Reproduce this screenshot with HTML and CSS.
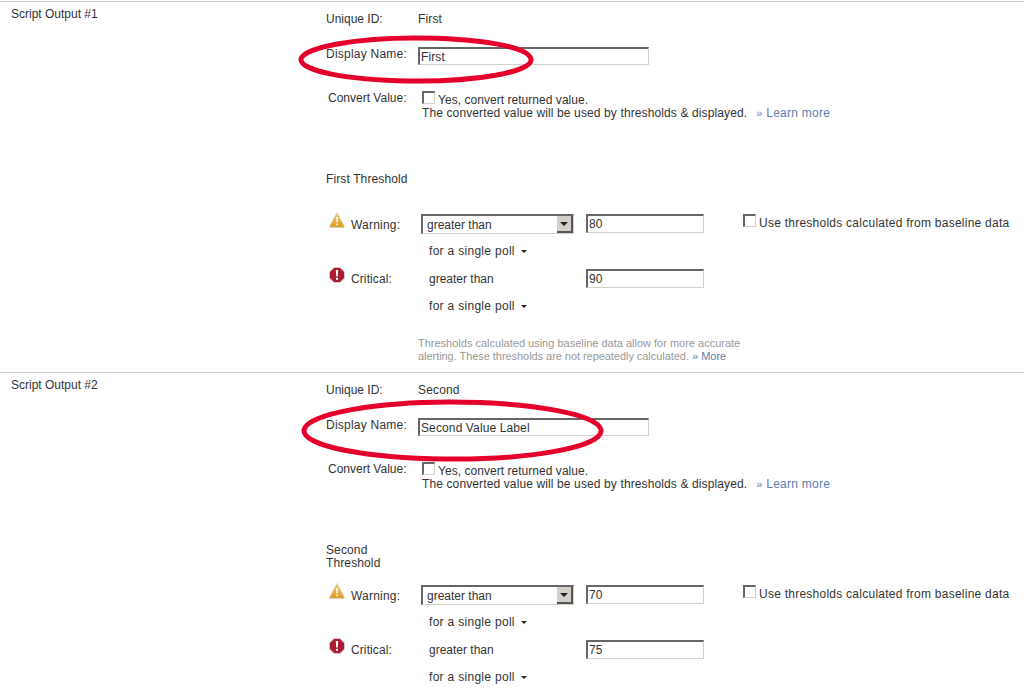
FILE: index.html
```html
<!DOCTYPE html>
<html lang="en">
<head>
    <meta charset="UTF-8">
    <title>Script Output Settings</title>
    <link rel="stylesheet" href="styles.css">
</head>
<body>
<!-- Script Output #1 -->
<div class="output">
    <div class="outputTitle">Script Output #1</div>
    <div class="outputForm">
        <div class="rowUnique"><span class="label">Unique ID:</span><span class="uniqueValue">First</span></div>
        <div class="rowName"><label class="label">Display Name:</label><input class="field nameField" type="text" value="First"></div>
        <div class="rowConvert">
            <label class="label convertLabel">Convert Value:</label>
            <input class="check convertCheck" type="checkbox">
            <div class="convertText">
                Yes, convert returned value.<br>
                <span class="convertNote">The converted value will be used by thresholds &amp; displayed.</span><a class="more learnMore" href="#"><span class="quote">»</span> Learn more</a>
            </div>
        </div>
        <div class="thresholdTitle">First Threshold</div>
        <div class="rowLevel">
            <svg class="icon" viewBox="0 0 16 16"><use href="#warnIcon"/></svg>
            <span class="levelLabel">Warning:</span>
            <div class="combo">
                <select class="comboSelect"><option>greater than</option></select>
                <span class="comboButton"><span class="arrow"></span></span>
            </div>
            <input class="field valueField" type="text" value="80">
            <input class="check baselineCheck" type="checkbox">
            <span class="baselineText">Use thresholds calculated from baseline data</span>
        </div>
        <div class="rowPoll">for a single poll<span class="arrow pollArrow"></span></div>
        <div class="rowLevel rowCritical">
            <svg class="icon" viewBox="0 0 16 16"><use href="#critIcon"/></svg>
            <span class="levelLabel">Critical:</span>
            <span class="plainOperator">greater than</span>
            <input class="field valueField" type="text" value="90">
        </div>
        <div class="rowPoll">for a single poll<span class="arrow pollArrow"></span></div>
        <div class="baselineNote">
            Thresholds calculated using baseline data allow for more accurate<br>
            <span class="noteTail">alerting. These thresholds are not repeatedly calculated.</span> <a class="more" href="#"><span class="quote">»</span> More</a>
        </div>
    </div>
    <svg class="mark markFirst" viewBox="0 0 240 50" preserveAspectRatio="none"><path d="M3 24C6 12 60 3 118 3C180 3 233 11 236 24C238 37 180 47 112 46C50 45 2 36 3 24Z"/></svg>
</div>

<!-- Script Output #2 -->
<div class="output">
    <div class="outputTitle">Script Output #2</div>
    <div class="outputForm">
        <div class="rowUnique"><span class="label">Unique ID:</span><span class="uniqueValue">Second</span></div>
        <div class="rowName"><label class="label">Display Name:</label><input class="field nameField" type="text" value="Second Value Label"></div>
        <div class="rowConvert">
            <label class="label convertLabel">Convert Value:</label>
            <input class="check convertCheck" type="checkbox">
            <div class="convertText">
                Yes, convert returned value.<br>
                <span class="convertNote">The converted value will be used by thresholds &amp; displayed.</span><a class="more learnMore" href="#"><span class="quote">»</span> Learn more</a>
            </div>
        </div>
        <div class="thresholdTitle">Second<br>Threshold</div>
        <div class="rowLevel">
            <svg class="icon" viewBox="0 0 16 16"><use href="#warnIcon"/></svg>
            <span class="levelLabel">Warning:</span>
            <div class="combo">
                <select class="comboSelect"><option>greater than</option></select>
                <span class="comboButton"><span class="arrow"></span></span>
            </div>
            <input class="field valueField" type="text" value="70">
            <input class="check baselineCheck" type="checkbox">
            <span class="baselineText">Use thresholds calculated from baseline data</span>
        </div>
        <div class="rowPoll">for a single poll<span class="arrow pollArrow"></span></div>
        <div class="rowLevel rowCritical">
            <svg class="icon" viewBox="0 0 16 16"><use href="#critIcon"/></svg>
            <span class="levelLabel">Critical:</span>
            <span class="plainOperator">greater than</span>
            <input class="field valueField" type="text" value="75">
        </div>
        <div class="rowPoll">for a single poll<span class="arrow pollArrow"></span></div>
    </div>
    <svg class="mark markSecond" viewBox="0 0 306 64" preserveAspectRatio="none"><path d="M3 31C6 14 80 3 150 3C225 3 300 14 303 31C305 49 225 61 145 60C70 59 2 48 3 31Z"/></svg>
</div>

<!-- Icons used by both blocks -->
<svg class="iconDefs" width="0" height="0">
    <defs>
        <linearGradient id="warnFill" x1="0" y1="0" x2="0" y2="1">
            <stop offset="0" stop-color="#f5c860"/>
            <stop offset="1" stop-color="#e09a20"/>
        </linearGradient>
        <g id="warnIcon">
            <path d="M8 .5L15.5 14.5Q15.5 15.5 14.5 15.5H1.5Q.5 15.5 .5 14.5Z" fill="url(#warnFill)" stroke="#d8d4c8"/>
            <path d="M7.1 5H8.9L8.6 10.6H7.4Z" fill="#fff"/>
            <rect x="7.2" y="11.6" width="1.6" height="1.7" fill="#fff"/>
        </g>
        <g id="critIcon">
            <path d="M5 .5H11L15.5 5V11L11 15.5H5L.5 11V5Z" fill="#a81c34" stroke="#d8c8cc"/>
            <path d="M6.8 3H9.2L8.8 9.6H7.2Z" fill="#fff"/>
            <rect x="7" y="10.8" width="2" height="2" fill="#fff"/>
        </g>
    </defs>
</svg>
</body>
</html>
```

FILE: styles.css
```css
/* Seite */
html, body {
    margin: 0;
    height: 696px;
    overflow: hidden;
}

body {
    padding-top: 1px;
    box-sizing: border-box;
    background-color: #fff;
    color: #333;
    font-family: "Liberation Sans", Arial, sans-serif;
    font-size: 12px;
    line-height: 13px;
}

/* One block per script output */
.output {
    position: relative;
    display: flex;
    height: 371px;
    box-sizing: border-box;
    border-top: 1px solid #ccc;
}

/* The second block is cut off by the window */
.output:last-of-type {
    height: 324px;
}

.outputTitle {
    width: 326px;
    flex: none;
    padding: 6px 0 0 11px;
    box-sizing: border-box;
}

.outputForm {
    flex: 1;
}

.label {
    display: block;
    width: 92px;
    flex: none;
}

/* Unique ID and name */
.rowUnique {
    display: flex;
    height: 32px;
    padding-top: 11px;
    box-sizing: border-box;
}

.uniqueValue {
    letter-spacing: 0.15px;
}

.rowName {
    display: flex;
    align-items: flex-start;
    height: 56px;
    padding-top: 12px;
    box-sizing: border-box;
}

.rowName .label {
    margin-top: 2px;
    letter-spacing: 0.23px;
}

.field {
    box-sizing: border-box;
    height: 18px;
    margin: 1px 0 0;
    padding: 0 1px 0 1px;
    border-style: solid;
    border-width: 2px 1px 1px 2px;
    border-color: #666 #d4d0c8 #d4d0c8 #666;
    background-color: #fff;
    color: #333;
    font: 12px "Liberation Sans", Arial, sans-serif;
    letter-spacing: 0.12px;
    outline: none;
}

.nameField {
    width: 231px;
}

/* Convert value */
.rowConvert {
    display: flex;
    height: 82px;
}

.convertLabel {
    width: 96px;
    margin-top: 2px;
    padding-left: 2px;
    box-sizing: border-box;
}

.check {
    appearance: none;
    box-sizing: border-box;
    width: 13px;
    height: 13px;
    margin: 0;
    flex: none;
    border-style: solid;
    border-width: 2px 1px 1px 2px;
    border-color: #666 #d4d0c8 #d4d0c8 #666;
    background-color: #fff;
}

.convertCheck {
    margin-top: 1px;
}

.convertText {
    margin: 4px 0 0 -13px;
    padding-left: 16px;
    white-space: nowrap;
    letter-spacing: 0.04px;
}

.convertNote {
    margin-left: -16px;
    letter-spacing: 0.12px;
}

.more {
    color: #5f7db0;
    text-decoration: none;
}

.learnMore {
    margin-left: 9px;
    letter-spacing: 0.25px;
}

.quote {
    font-size: 11px;
}

/* Thresholds */
.thresholdTitle {
    height: 42px;
    box-sizing: border-box;
    padding-top: 1px;
    letter-spacing: 0.12px;
    white-space: nowrap;
}

.rowLevel {
    position: relative;
    display: flex;
    align-items: flex-start;
    height: 20px;
}

.icon {
    width: 16px;
    height: 16px;
    flex: none;
    margin: -2px 0 0 3px;
}

.levelLabel {
    width: 70px;
    flex: none;
    margin: 5px 0 0 6px;
    letter-spacing: 0.2px;
}

.rowCritical .levelLabel {
    margin-top: 4px;
    letter-spacing: 0.1px;
}

.combo {
    position: relative;
    width: 153px;
    height: 20px;
    flex: none;
}

.comboSelect {
    appearance: none;
    display: block;
    box-sizing: border-box;
    width: 100%;
    height: 20px;
    padding: 0 0 0 4px;
    border-style: solid;
    border-width: 2px 1px 1px 2px;
    border-color: #666 #d4d0c8 #d4d0c8 #666;
    border-radius: 0;
    background-color: #fff;
    color: #333;
    font: 12px "Liberation Sans", Arial, sans-serif;
    outline: none;
}

.comboButton {
    position: absolute;
    top: 2px;
    right: 1px;
    display: flex;
    align-items: center;
    justify-content: center;
    width: 16px;
    height: 17px;
    box-sizing: border-box;
    border-right: 2px solid #555;
    border-bottom: 2px solid #555;
    background-color: #d4d0c8;
}

.arrow {
    display: inline-block;
    width: 0;
    height: 0;
    border-style: solid;
    border-width: 4px 4px 0;
    border-color: #222 transparent transparent;
}

.rowLevel .valueField {
    width: 118px;
    height: 19px;
    margin: 0 0 0 12px;
    flex: none;
}

.plainOperator {
    width: 153px;
    flex: none;
    margin-top: 4px;
    padding-left: 8px;
    box-sizing: border-box;
}

.baselineCheck {
    margin-left: 39px;
}

.baselineText {
    margin: 3px 0 0 3px;
    white-space: nowrap;
    letter-spacing: 0.25px;
}

.rowPoll {
    height: 35px;
    padding: 11px 0 0 103px;
    box-sizing: border-box;
    letter-spacing: 0.3px;
}

.pollArrow {
    margin: 0 0 2px 6px;
    border-width: 3px 3.5px 0;
}

.baselineNote {
    margin: 13px 0 0 92px;
    color: #999;
    font-size: 11px;
    white-space: nowrap;
}

.noteTail {
    letter-spacing: -0.05px;
}

/* Red hand-drawn marks over the display name */
.mark {
    position: absolute;
    overflow: visible;
    fill: none;
    stroke: #e4002b;
    stroke-width: 5;
}

.markFirst {
    left: 298px;
    top: 33px;
    width: 237px;
    height: 50px;
}

.markSecond {
    left: 301px;
    top: 26px;
    width: 303px;
    height: 64px;
}

.iconDefs {
    position: absolute;
}
```
